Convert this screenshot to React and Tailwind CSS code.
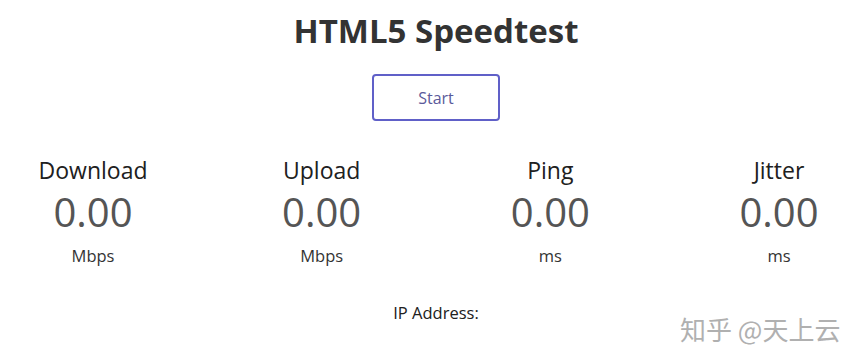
export default function App() {
  const stats = [
    { label: "Download", value: "0.00", unit: "Mbps" },
    { label: "Upload", value: "0.00", unit: "Mbps" },
    { label: "Ping", value: "0.00", unit: "ms" },
    { label: "Jitter", value: "0.00", unit: "ms" },
  ];

  return (
    <div
      className="relative h-[363px] w-[863px] overflow-hidden bg-white pl-[9px] text-[#202020]"
      style={{ fontFamily: '"Open Sans", "Noto Sans", sans-serif' }}
    >
      <h1 className="pt-[10px] text-center text-[33px] font-bold leading-[42px] text-[#333]">
        HTML5 Speedtest
      </h1>

      <div className="mt-[22px] flex justify-center">
        <button
          type="button"
          className="h-[47px] w-[128px] rounded-[4px] border-2 border-[#6060c8] bg-white text-[16px] text-[#5a5a9a]"
        >
          Start
        </button>
      </div>

      <div className="mt-[35px] flex justify-center">
        {stats.map((s) => (
          <div
            key={s.label}
            className="flex w-[228.67px] shrink-0 flex-col items-center"
          >
            <div className="text-[23px] leading-[28px]">{s.label}</div>
            <div className="mt-[3px] text-[40px] leading-[50px] text-[#555]">
              {s.value}
            </div>
            <div className="mt-[8px] text-[16.5px] leading-[22px] text-[#333]">
              {s.unit}
            </div>
          </div>
        ))}
      </div>

      <div className="mt-[35px] text-center text-[16.5px] leading-[22px]">
        IP Address:
      </div>

      <div
        className="absolute left-[680px] top-[309px] text-[26px] text-[#b0b0b0]"
        style={{ fontFamily: '"Noto Sans CJK SC", sans-serif' }}
      >
        知乎 @天上云
      </div>
    </div>
  );
}
